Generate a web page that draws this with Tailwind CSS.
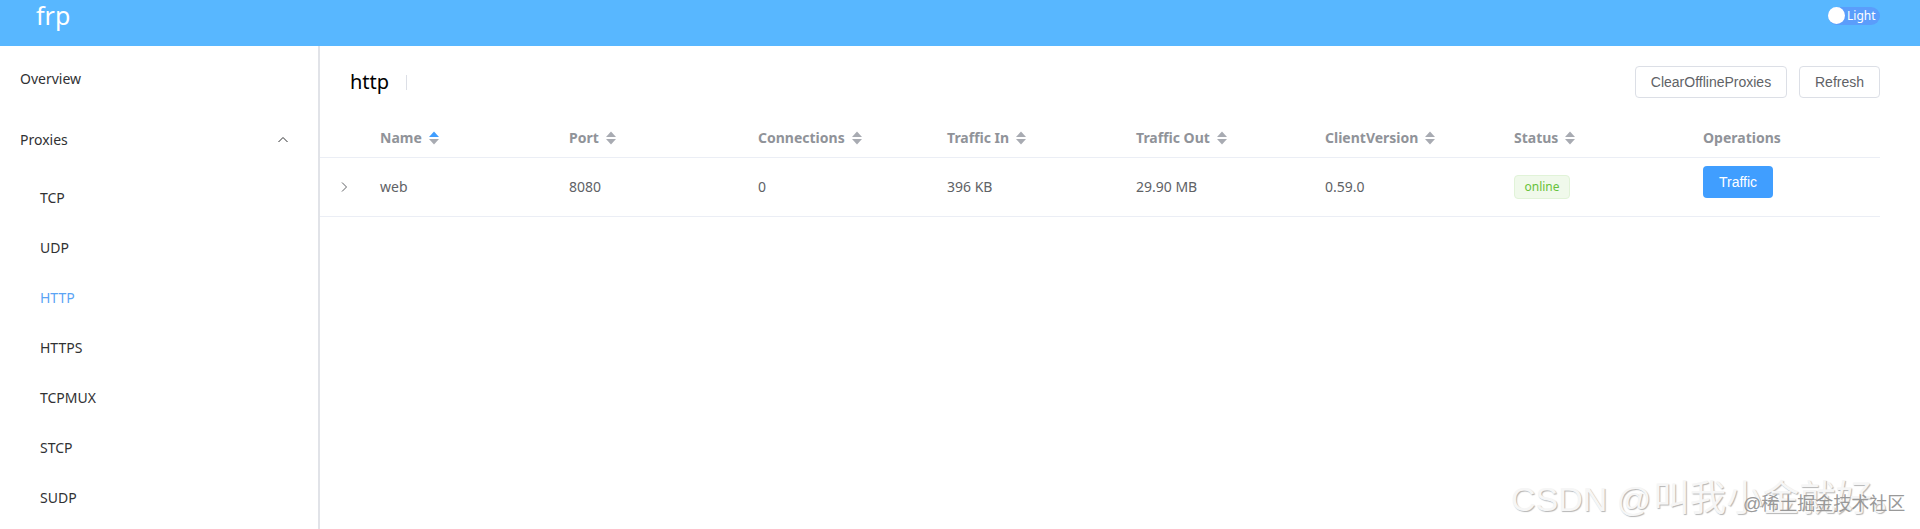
<!DOCTYPE html>
<html lang="en">
<head>
    <meta charset="UTF-8">
    <title>frp client admin UI</title>
    <script src="https://cdn.jsdelivr.net/npm/@tailwindcss/browser@4"></script>
</head>
<body class="relative h-[529px] w-[1920px] overflow-hidden bg-white font-['Noto_Sans','Noto_Sans_CJK_SC',sans-serif] text-sm text-[#303133]">
    <!-- Header -->
    <header class="flex h-[46px] items-start justify-between bg-[#58b7ff] pl-9 pr-10 text-white">
        <div class="-mt-[2px] text-[25px] leading-[34px]">frp</div>
        <div class="relative mt-[7px] flex h-[18px] w-[52px] items-center rounded-full bg-[#5b9dfb] pl-[19px] text-xs">
            <span class="absolute left-0 top-[0px] h-[17px] w-[17px] rounded-full bg-white"></span>
            <span>Light</span>
        </div>
    </header>

    <div class="flex h-[483px]">
        <!-- Sidebar -->
        <aside class="w-[320px] shrink-0 border-r-2 border-[#e1e3e8]">
            <div class="mt-[5px] flex h-14 items-center pl-5">Overview</div>
            <div class="mt-[5px] flex h-14 items-center justify-between pl-5 pr-[29px]">
                <span>Proxies</span>
                <svg class="h-3 w-3 text-[#303133]" viewBox="0 0 12 12" fill="none" stroke="currentColor" stroke-width="1"><path d="M1.5 8 6 3.5 10.5 8"/></svg>
            </div>
            <ul class="mt-[5px]">
                <li class="flex h-[50px] items-center pl-10">TCP</li>
                <li class="flex h-[50px] items-center pl-10">UDP</li>
                <li class="flex h-[50px] items-center pl-10 text-[#5ba4f5]">HTTP</li>
                <li class="flex h-[50px] items-center pl-10">HTTPS</li>
                <li class="flex h-[50px] items-center pl-10">TCPMUX</li>
                <li class="flex h-[50px] items-center pl-10">STCP</li>
                <li class="flex h-[50px] items-center pl-10">SUDP</li>
            </ul>
        </aside>

        <!-- Main -->
        <main class="w-[1560px] shrink-0">
            <div class="flex h-[72px] items-start justify-between">
                <div class="mt-5 flex items-center pl-[30px] text-xl leading-8 text-black">
                    <span>http</span>
                    <span class="ml-[17px] h-[15px] w-px bg-[#dcdfe6]"></span>
                </div>
                <div class="mt-5 flex gap-3 font-['Liberation_Sans',sans-serif] text-[#606266]">
                    <button class="h-8 w-[152px] rounded border border-[#dcdfe6] bg-white">ClearOfflineProxies</button>
                    <button class="h-8 w-[81px] rounded border border-[#dcdfe6] bg-white">Refresh</button>
                </div>
            </div>

            <!-- Table head -->
            <div class="grid h-[40px] grid-cols-[50px_repeat(7,189px)_1fr] items-center border-b border-[#ebeef5] font-bold text-[#909399]">
                <div></div>
                <div class="flex items-center gap-[7px] pl-2.5">Name
                    <svg class="h-3.5 w-2.5" viewBox="0 0 10 14"><path d="M5 .5 10 6H0z" fill="#409eff"/><path d="M5 13.5 0 8h10z" fill="#a8abb2"/></svg>
                </div>
                <div class="flex items-center gap-[7px] pl-2.5">Port
                    <svg class="h-3.5 w-2.5" viewBox="0 0 10 14"><path d="M5 .5 10 6H0z" fill="#a8abb2"/><path d="M5 13.5 0 8h10z" fill="#a8abb2"/></svg>
                </div>
                <div class="flex items-center gap-[7px] pl-2.5">Connections
                    <svg class="h-3.5 w-2.5" viewBox="0 0 10 14"><path d="M5 .5 10 6H0z" fill="#a8abb2"/><path d="M5 13.5 0 8h10z" fill="#a8abb2"/></svg>
                </div>
                <div class="flex items-center gap-[7px] pl-2.5">Traffic In
                    <svg class="h-3.5 w-2.5" viewBox="0 0 10 14"><path d="M5 .5 10 6H0z" fill="#a8abb2"/><path d="M5 13.5 0 8h10z" fill="#a8abb2"/></svg>
                </div>
                <div class="flex items-center gap-[7px] pl-2.5">Traffic Out
                    <svg class="h-3.5 w-2.5" viewBox="0 0 10 14"><path d="M5 .5 10 6H0z" fill="#a8abb2"/><path d="M5 13.5 0 8h10z" fill="#a8abb2"/></svg>
                </div>
                <div class="flex items-center gap-[7px] pl-2.5">ClientVersion
                    <svg class="h-3.5 w-2.5" viewBox="0 0 10 14"><path d="M5 .5 10 6H0z" fill="#a8abb2"/><path d="M5 13.5 0 8h10z" fill="#a8abb2"/></svg>
                </div>
                <div class="flex items-center gap-[7px] pl-2.5">Status
                    <svg class="h-3.5 w-2.5" viewBox="0 0 10 14"><path d="M5 .5 10 6H0z" fill="#a8abb2"/><path d="M5 13.5 0 8h10z" fill="#a8abb2"/></svg>
                </div>
                <div class="pl-2.5">Operations</div>
            </div>

            <!-- Table row -->
            <div class="grid h-[59px] grid-cols-[50px_repeat(7,189px)_1fr] items-center border-b border-[#ebeef5] text-[#606266]">
                <div class="flex pl-[18px]">
                    <svg class="h-3 w-3" viewBox="0 0 12 12" fill="none" stroke="#606266" stroke-width="1"><path d="M4 1.5 8.5 6 4 10.5"/></svg>
                </div>
                <div class="pl-2.5">web</div>
                <div class="pl-2.5">8080</div>
                <div class="pl-2.5">0</div>
                <div class="pl-2.5">396 KB</div>
                <div class="pl-2.5">29.90 MB</div>
                <div class="pl-2.5">0.59.0</div>
                <div class="pl-2.5">
                    <span class="flex h-6 w-14 items-center justify-center rounded border border-[#e1f3d8] bg-[#f0f9eb] text-xs text-[#67c23a]">online</span>
                </div>
                <div class="-mt-[10px] pl-2.5">
                    <button class="h-8 w-[70px] rounded bg-[#409eff] font-['Liberation_Sans',sans-serif] text-sm text-white">Traffic</button>
                </div>
            </div>
        </main>
    </div>

    <!-- Watermark -->
    <div class="pointer-events-none absolute left-[1511px] top-[479px] whitespace-nowrap font-['Liberation_Sans','Noto_Sans_CJK_SC',sans-serif] text-[34px] leading-10 text-[#f6f6f6] [text-shadow:1px_1px_1px_#b5b5b5]">CSDN @<span class="ml-[2px] text-[36.5px]">叫我小金就好。</span></div>
    <div class="pointer-events-none absolute left-[1743px] top-[492px] whitespace-nowrap font-['Liberation_Sans','Noto_Sans_CJK_SC',sans-serif] text-[18px] leading-6 text-[#999999]">@稀土掘金技术社区</div>
</body>
</html>
